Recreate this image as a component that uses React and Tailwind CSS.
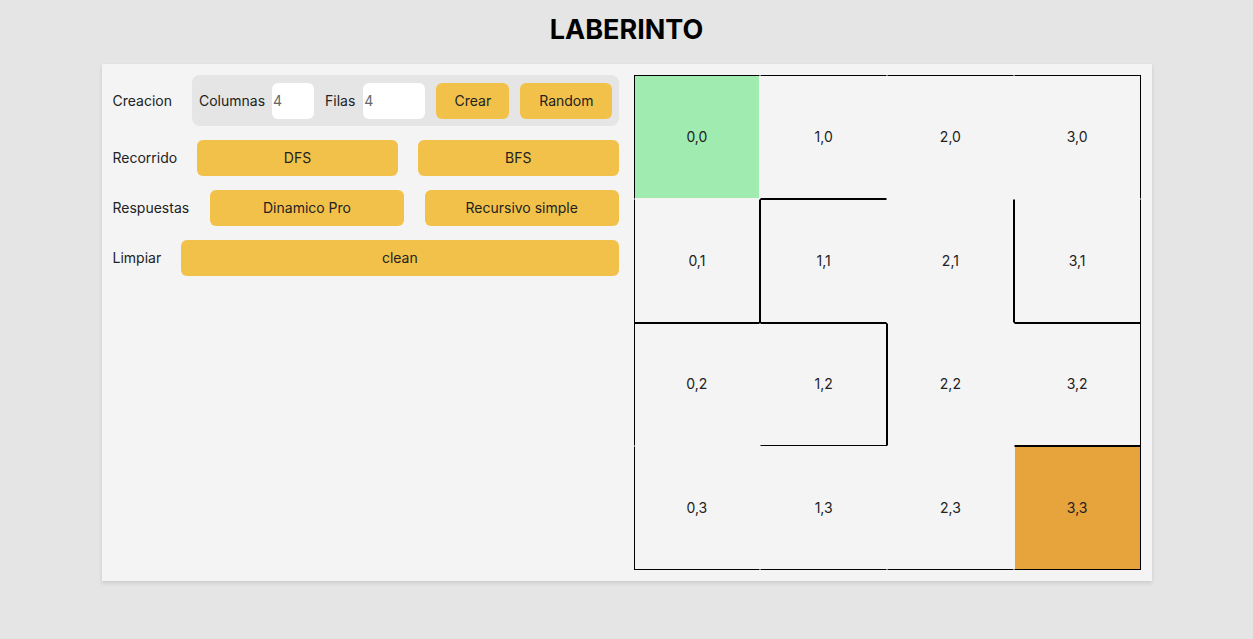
import React, { useState } from 'react';

const walls = {
  '0,0': 'tl',
  '1,0': 'tb',
  '2,0': 't',
  '3,0': 'tr',
  '0,1': 'lrb',
  '1,1': 'ltb',
  '2,1': 'r',
  '3,1': 'lrb',
  '0,2': 'lt',
  '1,2': 'trb',
  '2,2': 'l',
  '3,2': 'trb',
  '0,3': 'lb',
  '1,3': 'b',
  '2,3': 'b',
  '3,3': 'trb',
};

const Cell = ({ x, y }) => {
  const key = `${x},${y}`;
  const w = walls[key] || '';
  const bg = key === '0,0' ? 'bg-[#a0ebb0]' : key === '3,3' ? 'bg-[#e8a43c]' : 'bg-[#f4f4f4]';
  return (
    <div
      className={`flex items-center justify-center text-sm text-[#222] border border-[#f4f4f4] ${bg} ${w.includes('t') ? 'border-t-black' : ''} ${w.includes('r') ? 'border-r-black' : ''} ${w.includes('b') ? 'border-b-black' : ''} ${w.includes('l') ? 'border-l-black' : ''}`}
    >
      {key}
    </div>
  );
};

const Btn = ({ children, className = '' }) => (
  <button className={`h-9 rounded-md bg-[#f2c14a] text-sm text-[#222] ${className}`}>{children}</button>
);

const App = () => {
  const [cols, setCols] = useState('4');
  const [rows, setRows] = useState('4');

  return (
    <div className="min-h-screen bg-[#e5e5e5] font-['Inter',sans-serif] text-[#222]">
      <h1 className="pt-[13px] text-center text-[27px] font-bold leading-[34px] text-black">LABERINTO</h1>
      <div className="mx-auto mt-[17px] grid w-[1050px] grid-cols-2 gap-[14px] bg-[#f4f4f4] p-[11px] shadow-[0_2px_4px_rgba(0,0,0,0.12)]">
        <div className="flex flex-col gap-[14px] pr-[1px]">
          <div className="flex items-center gap-5 text-sm">
            <span>Creacion</span>
            <div className="flex h-[51px] flex-1 items-center rounded-lg bg-[#e5e5e5] px-[7px]">
              <span>Columnas</span>
              <input
                value={cols}
                onChange={(e) => setCols(e.target.value)}
                className="ml-[7px] h-9 w-[42px] rounded-md bg-white px-[1px] text-sm text-[#666] outline-none"
              />
              <span className="ml-[11px]">Filas</span>
              <input
                value={rows}
                onChange={(e) => setRows(e.target.value)}
                className="ml-[8px] h-9 w-[62px] rounded-md bg-white px-[1px] text-sm text-[#666] outline-none"
              />
              <Btn className="ml-[11px] w-[73px]">Crear</Btn>
              <Btn className="ml-[11px] w-[92px]">Random</Btn>
            </div>
          </div>
          <div className="flex items-center gap-5 text-sm">
            <span>Recorrido</span>
            <Btn className="flex-1">DFS</Btn>
            <Btn className="flex-1">BFS</Btn>
          </div>
          <div className="flex items-center gap-[21px] text-sm">
            <span>Respuestas</span>
            <Btn className="flex-1">Dinamico Pro</Btn>
            <Btn className="flex-1">Recursivo simple</Btn>
          </div>
          <div className="flex items-center gap-5 text-sm">
            <span>Limpiar</span>
            <Btn className="flex-1">clean</Btn>
          </div>
        </div>
        <div className="grid h-[495px] grid-cols-4 grid-rows-4">
          {[0, 1, 2, 3].map((y) => [0, 1, 2, 3].map((x) => <Cell key={`${x}-${y}`} x={x} y={y} />))}
        </div>
      </div>
    </div>
  );
};

export default App;
